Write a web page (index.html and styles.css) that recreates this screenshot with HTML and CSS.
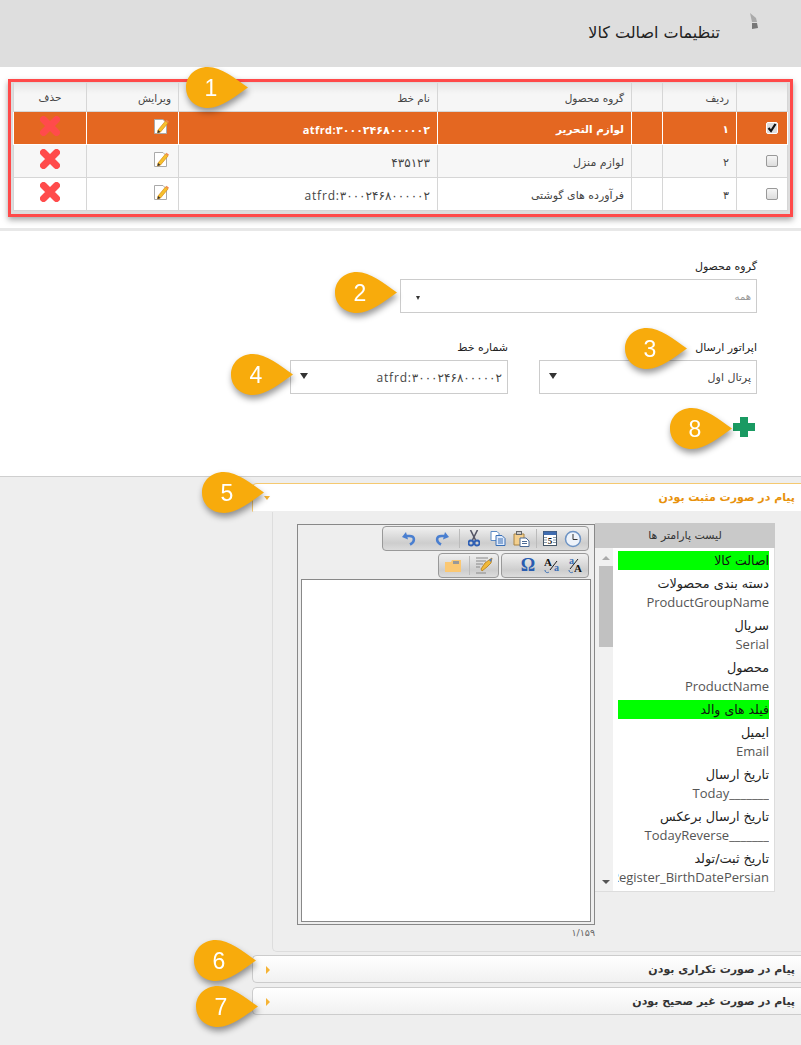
FILE: index.html
```html
<!DOCTYPE html>
<html lang="fa" dir="rtl">
<head>
  <meta charset="utf-8">
  <title>تنظیمات اصالت کالا</title>
  <link rel="stylesheet" href="styles.css">
</head>
<body>

<svg class="defs" width="0" height="0">
  <symbol id="drop" viewBox="0 0 62 41">
    <path d="M22 0C35 0 50 12 62 20.500C50 29 35 41 22 41C8 41 0 31 0 20.500C0 10 8 0 22 0Z"/>
  </symbol>
  <symbol id="note" viewBox="0 0 16 17">
    <path d="M1.500 1.500H10L13.500 5V15.500H1.500Z" fill="#fff" stroke="#aaa"/>
    <path d="M5 12L12.500 3L15 5L7.500 14L4.500 15Z" fill="#f6c02c" stroke="#d98a12" stroke-width=".7"/>
    <path d="M12.500 3L13.500 1.800L16 3.800L15 5Z" fill="#f08a4b"/>
    <path d="M4.500 15L5 12L7.500 14Z" fill="#333"/>
  </symbol>
  <symbol id="cross" viewBox="0 0 20 20">
    <path d="M3.500 3.500L16.500 16.500M16.500 3.500L3.500 16.500" stroke="#ff4b4b" stroke-width="7" stroke-linecap="round"/>
  </symbol>
</svg>

<!-- page title -->
<div class="page_head">
  <svg class="head_icon" width="8" height="16" viewBox="0 0 8 16"><path d="M0 0L6 5L7 9H2Z" fill="#aaa"/><path d="M2 10H7L8 15L2 16Z" fill="#777"/></svg>
  <h1 class="page_title">تنظیمات اصالت کالا</h1>
</div>

<!-- grid with the red frame -->
<div class="grid_area">
  <div class="grid_frame">
    <table class="grid">
      <colgroup>
        <col class="c_check"><col class="c_row"><col class="c_gap"><col class="c_group"><col class="c_line"><col class="c_edit"><col class="c_del">
      </colgroup>
      <tr class="grid_head">
        <th></th><th>ردیف</th><th></th><th>گروه محصول</th><th>نام خط</th><th>ویرایش</th><th class="center">حذف</th>
      </tr>
      <tr class="selected">
        <td class="cell_check"><span class="check on">
          <svg width="10" height="10" viewBox="0 0 10 10"><path d="M1.500 5L4 8L8.500 1" fill="none" stroke="#111" stroke-width="2.200"/></svg>
        </span></td>
        <td>۱</td><td></td><td>لوازم التحریر</td><td class="num"><span dir="ltr">atfrd:۳۰۰۰۲۴۶۸۰۰۰۰۰۲</span></td>
        <td class="cell_note"><svg class="note" width="16" height="17"><use href="#note"/></svg></td>
        <td class="center"><svg class="cross" width="20" height="20"><use href="#cross"/></svg></td>
      </tr>
      <tr class="odd">
        <td class="cell_check"><span class="check"></span></td>
        <td>۲</td><td></td><td>لوازم منزل</td><td class="num">۴۳۵۱۲۳</td>
        <td class="cell_note"><svg class="note" width="16" height="17"><use href="#note"/></svg></td>
        <td class="center"><svg class="cross" width="20" height="20"><use href="#cross"/></svg></td>
      </tr>
      <tr>
        <td class="cell_check"><span class="check"></span></td>
        <td>۳</td><td></td><td>فرآورده های گوشتی</td><td class="num"><span dir="ltr">atfrd:۳۰۰۰۲۴۶۸۰۰۰۰۰۲</span></td>
        <td class="cell_note"><svg class="note" width="16" height="17"><use href="#note"/></svg></td>
        <td class="center"><svg class="cross" width="20" height="20"><use href="#cross"/></svg></td>
      </tr>
    </table>
  </div>
</div>

<!-- form -->
<div class="form_area">
  <div class="field wide">
    <label class="field_label">گروه محصول</label>
    <div class="combo"><span class="combo_hint">همه</span><span class="arrow small"></span></div>
  </div>
  <div class="field_row">
    <div class="field">
      <label class="field_label">اپراتور ارسال</label>
      <div class="combo"><span>پرتال اول</span><span class="arrow"></span></div>
    </div>
    <div class="field">
      <label class="field_label">شماره خط</label>
      <div class="combo"><span class="num" dir="ltr">atfrd:۳۰۰۰۲۴۶۸۰۰۰۰۰۲</span><span class="arrow"></span></div>
    </div>
  </div>
  <svg class="plus" width="22" height="20" viewBox="0 0 22 20"><path d="M7 0H15V6H22V14H15V20H7V14H0V6H7Z" fill="#1a9a62"/></svg>
</div>

<!-- message panels -->
<div class="acc_area">
  <div class="acc_head open">پیام در صورت مثبت بودن<span class="acc_arrow down"></span></div>
  <div class="acc_body">

    <div class="params">
      <div class="params_title">لیست پارامتر ها</div>
      <div class="params_box">
        <div class="params_list">
          <div class="param_group">اصالت کالا</div>
          <div class="param"><div>دسته بندی محصولات</div><div class="param_key"><span dir="ltr">ProductGroupName</span></div></div>
          <div class="param"><div>سریال</div><div class="param_key"><span dir="ltr">Serial</span></div></div>
          <div class="param"><div>محصول</div><div class="param_key"><span dir="ltr">ProductName</span></div></div>
          <div class="param_group second">فیلد های والد</div>
          <div class="param"><div>ایمیل</div><div class="param_key"><span dir="ltr">Email</span></div></div>
          <div class="param"><div>تاریخ ارسال</div><div class="param_key"><span dir="ltr">Today_______</span></div></div>
          <div class="param"><div>تاریخ ارسال برعکس</div><div class="param_key"><span dir="ltr">TodayReverse_______</span></div></div>
          <div class="param"><div>تاریخ ثبت/تولد</div><div class="param_key"><span dir="ltr">Register_BirthDatePersian</span></div></div>
        </div>
        <div class="scroll">
          <span class="scroll_up"></span>
          <span class="scroll_thumb"></span>
          <span class="scroll_down"></span>
        </div>
      </div>
    </div>

    <div class="editor_col">
      <div class="editor">
        <div class="tool_row">
          <div class="tool_group first">
            <span class="tool"><svg width="18" height="18" viewBox="0 0 18 18"><circle cx="9" cy="9" r="7.500" fill="#eef3fa" stroke="#6d93c4" stroke-width="1.500"/><path d="M9 4V9.500H13.500" fill="none" stroke="#333"/></svg></span>
            <span class="tool narrow"><svg width="14" height="15" viewBox="0 0 14 15"><rect x=".5" y=".5" width="13" height="14" fill="#fff" stroke="#456"/><rect x=".5" y=".5" width="13" height="3.500" fill="#3f6cb0"/><path d="M1 6.500H4M1 9H4M1 11.500H4M10 6.500H13M10 9H13M10 11.500H13" stroke="#89a"/><text class="tool_letter" x="7" y="12.500" text-anchor="middle">5</text></svg></span>
            <span class="tool_sep"></span>
            <span class="tool"><svg width="18" height="16" viewBox="0 0 18 16"><path d="M1 3H4V1H8V3H11V14H1Z" fill="#f3cf8e" stroke="#a98444"/><rect x="3.500" y=".5" width="5" height="3" fill="#ccc" stroke="#666"/><path d="M7 7H13L16 10V15.500H7Z" fill="#fff" stroke="#4c6a96"/><path d="M9 10.500H14M9 12.500H14" stroke="#4c6a96"/></svg></span>
            <span class="tool"><svg width="16" height="15" viewBox="0 0 16 15"><path d="M1 .5H7L9 2.500V9.500H1Z" fill="#fff" stroke="#5b8ac4"/><path d="M6 4.500H12L15 7.500V14.500H6Z" fill="#dfeafa" stroke="#3a6fb5"/><path d="M8 8H13M8 10H13M8 12H13" stroke="#3a6fb5"/></svg></span>
            <span class="tool"><svg width="12" height="17" viewBox="0 0 12 17"><path d="M2.500 0L7.500 10M9.500 0L4.500 10" stroke="#556" stroke-width="1.600"/><circle cx="3" cy="13" r="2.500" fill="none" stroke="#2f5fb3" stroke-width="1.800"/><circle cx="9" cy="13" r="2.500" fill="none" stroke="#2f5fb3" stroke-width="1.800"/></svg></span>
            <span class="tool_sep"></span>
            <span class="tool redo"><svg width="14" height="15" viewBox="0 0 14 15"><path d="M10 1L14 6L8 8.500Z" fill="#4a7fd0"/><path d="M10.500 5H6.500C1 5 .5 10.500 6 13.500" fill="none" stroke="#4a7fd0" stroke-width="2.600"/></svg></span>
            <span class="tool undo"><svg width="14" height="15" viewBox="0 0 14 15"><path d="M4 1L0 6L6 8.500Z" fill="#4a7fd0"/><path d="M3.500 5H7.500C13 5 13.500 10.500 8 13.500" fill="none" stroke="#4a7fd0" stroke-width="2.600"/></svg></span>
          </div>
        </div>
        <div class="tool_row">
          <div class="tool_group format">
            <span class="tool"><svg width="16" height="17" viewBox="0 0 16 17"><text class="tool_a big" x="6" y="15">A</text><text class="tool_a blue" x="1" y="7">a</text><path d="M2 12L10 2" stroke="#222"/><path d="M1 13C1 16 4 16 5 15" fill="none" stroke="#3a6fb5"/></svg></span>
            <span class="tool"><svg width="16" height="17" viewBox="0 0 16 17"><text class="tool_a big" x="0" y="9">A</text><text class="tool_a blue" x="10" y="14">a</text><path d="M6 13L13 4" stroke="#222"/><path d="M1 13C1 16 4 16 5 15" fill="none" stroke="#3a6fb5"/></svg></span>
            <span class="tool omega">Ω</span>
          </div>
          <div class="tool_group files">
            <span class="tool"><svg width="17" height="17" viewBox="0 0 17 17"><path d="M0 1H12M0 4H10M0 7H7M0 10H4M0 16H10" stroke="#888"/><path d="M5 12L9 6L13 3L16 1L15 6L11 10L6 14Z" fill="#f0b93a" stroke="#b57b17" stroke-width=".8"/><path d="M13 3L16 1L15 5Z" fill="#4a7fd0"/></svg></span>
            <span class="tool_sep"></span>
            <span class="tool folder"><svg width="16" height="12" viewBox="0 0 16 12"><path d="M0 2H6L7 0H16V12H0Z" fill="#fbc873"/><rect x="8" y="1" width="6" height="3" fill="#999"/></svg></span>
          </div>
        </div>
        <div class="edit_box"></div>
      </div>
      <div class="counter"><span dir="ltr">۱/۱۵۹</span></div>
    </div>

  </div>
  <div class="acc_head">پیام در صورت تکراری بودن<span class="acc_arrow"></span></div>
  <div class="acc_head">پیام در صورت غیر صحیح بودن<span class="acc_arrow"></span></div>
</div>

<!-- numbered callouts over the screenshot -->
<svg class="mark m1" width="62" height="41"><use href="#drop"/><text x="25" y="29">1</text></svg>
<svg class="mark m2" width="62" height="41"><use href="#drop"/><text x="25" y="29">2</text></svg>
<svg class="mark m3" width="62" height="41"><use href="#drop"/><text x="25" y="29">3</text></svg>
<svg class="mark m4" width="62" height="41"><use href="#drop"/><text x="25" y="29">4</text></svg>
<svg class="mark m5" width="62" height="41"><use href="#drop"/><text x="25" y="29">5</text></svg>
<svg class="mark m6" width="62" height="41"><use href="#drop"/><text x="25" y="29">6</text></svg>
<svg class="mark m7" width="62" height="41"><use href="#drop"/><text x="25" y="29">7</text></svg>
<svg class="mark m8" width="62" height="41"><use href="#drop"/><text x="25" y="29">8</text></svg>

</body>
</html>
```

FILE: styles.css
```css
/** whole page **/
  html, body {
    margin: 0;
    padding: 0;
    height: 1045px;
    overflow: hidden;
  }

  body {
    position: relative;
    background-color: #eeeeee;
    color: #333333;
    font-family: "DejaVu Sans", sans-serif;
    font-size: 11px;
  }

  svg {
    direction: ltr;
  }

  .defs {
    position: absolute;
  }

/** title bar **/
  .page_head {
    display: flex;
    align-items: flex-start;
    gap: 30px;
    height: 67px;
    padding-right: 43px;
    background-color: #dedede;
  }

  .head_icon {
    margin-top: 13px;
  }

  .page_title {
    margin: 22px 0 0 0;
    font-size: 16px;
    font-weight: normal;
    line-height: 22px;
    color: #222222;
  }

/** white strip round the grid **/
  .grid_area {
    padding: 12px 8px 11px 8px;
    background-color: #ffffff;
  }

/** red frame round the grid **/
  .grid_frame {
    box-sizing: border-box;
    height: 138px;
    padding: 1px 2px 0 2px;
    background-color: #dddddd;
    border: 3px solid #ff4a4a;
    box-shadow: 0 3px 6px rgba(0, 0, 0, 0.35);
  }

/** the grid **/
  .grid {
    width: 774px;
    table-layout: fixed;
    border-collapse: collapse;
    background-color: #ffffff;
  }

  .c_check { width: 51px; }
  .c_row { width: 74px; }
  .c_gap { width: 31px; }
  .c_group { width: 194px; }
  .c_line { width: 259px; }
  .c_edit { width: 92px; }
  .c_del { width: 73px; }

  .grid th,
  .grid td {
    padding: 3px 7px 0 7px;
    border: 1px solid #d6d6d6;
    text-align: right;
    font-size: 11px;
    color: #444444;
    white-space: nowrap;
    overflow: hidden;
  }

  .grid th {
    height: 28px;
    padding-top: 2px;
    box-sizing: border-box;
    font-size: 10.500px;
    font-weight: normal;
    background: linear-gradient(#e6e6e6, #f6f6f6 40%);
    border-top: 0;
  }

  .grid td {
    height: 32px;
    box-sizing: border-box;
    height: 33px;
  }

  .grid .center {
    text-align: center;
    padding: 0;
  }

  .grid td.center {
    padding-bottom: 3px;
  }

  .grid .cell_check {
    padding: 0 9px 0 0;
  }

  .grid .cell_note {
    padding: 0 7px 2px 7px;
  }

  .grid .odd td {
    background-color: #f7f7f7;
  }

  .grid .selected td {
    background-color: #e46721;
    border-color: #ffffff;
    color: #ffffff;
    font-size: 10.500px;
    font-weight: bold;
  }

  .grid .num,
  .combo .num {
    font-family: "Open Sans", "DejaVu Sans", sans-serif;
    font-size: 12px;
    letter-spacing: 0.800px;
  }

  .grid .selected .num {
    font-size: 11px;
    letter-spacing: 0.400px;
  }

  .note {
    display: block;
    margin-right: 2px;
  }

  .cross {
    display: block;
    margin: 0 auto;
  }

  .check {
    display: block;
    box-sizing: border-box;
    width: 12px;
    height: 12px;
    background: linear-gradient(#f6f6f6, #dddddd);
    border: 1px solid #999999;
    border-radius: 2px;
  }

  .check svg {
    display: block;
  }

  .check.on {
    background: #dddddd;
    border-color: #ffffff;
  }

/** form area **/
  .form_area {
    box-sizing: border-box;
    height: 249px;
    padding: 28px 44px 0 0;
    background-color: #ffffff;
    border-top: 3px solid #e8e8e8;
    border-bottom: 1px solid #cfcfcf;
  }

  .field {
    width: 218px;
  }

  .field.wide {
    width: 357px;
  }

  .field_row {
    display: flex;
    gap: 31px;
    margin-top: 27px;
  }

  .field_label {
    display: block;
    height: 16px;
    margin-bottom: 4px;
    font-size: 11px;
    line-height: 16px;
    color: #222222;
  }

  .combo {
    box-sizing: border-box;
    display: flex;
    justify-content: space-between;
    align-items: center;
    height: 34px;
    padding: 0 5px 0 9px;
    border: 1px solid #cccccc;
    background-color: #ffffff;
    font-size: 11px;
    color: #444444;
  }

  .combo_hint {
    color: #999999;
    font-size: 10px;
  }

  .arrow {
    width: 0;
    height: 0;
    border-style: solid;
    border-width: 6px 4px 0 4px;
    border-color: #333333 transparent transparent transparent;
    margin-bottom: 3px;
  }

  .arrow.small {
    border-width: 4px 2.500px 0 2.500px;
    margin: 4px 6px 0 6px;
  }

  .plus {
    display: block;
    margin: 23px 2px 0 0;
  }

/** message panels **/
  .acc_area {
    padding: 6px 0 0 252px;
  }

  .acc_head {
    box-sizing: border-box;
    position: relative;
    height: 28px;
    margin-bottom: 4px;
    padding-right: 6px;
    background: linear-gradient(#ffffff, #f1f1f1);
    border: 1px solid #cccccc;
    border-right: 0;
    border-radius: 5px 0 0 5px;
    font-size: 11px;
    font-weight: bold;
    line-height: 27px;
    color: #333333;
  }

  .acc_head.open {
    height: 29px;
    margin-bottom: 0;
    background: #ffffff;
    border-color: #f5c970;
    border-bottom-color: #eeeeee;
    border-radius: 5px 0 0 0;
    color: #e8920c;
  }

  .acc_arrow {
    position: absolute;
    left: 13px;
    top: 10px;
    width: 0;
    height: 0;
    border-style: solid;
    border-width: 4px 0 4px 4px;
    border-color: transparent transparent transparent #f5b335;
  }

  .acc_arrow.down {
    top: 12px;
    left: 11px;
    border-width: 4px 3px 0 3px;
    border-color: #f5b335 transparent transparent transparent;
  }

  .acc_body {
    box-sizing: border-box;
    display: flex;
    align-items: flex-start;
    height: 440px;
    margin: 0 0 3px 20px;
    padding: 11px 26px 0 0;
    border: 1px solid #dddddd;
    border-width: 0 0 1px 1px;
    border-radius: 0 0 0 5px;
  }

/** parameter list **/
  .params {
    width: 180px;
  }

  .params_title {
    height: 25px;
    background-color: #c9c9c9;
    text-align: center;
    font-size: 11px;
    line-height: 25px;
    color: #333333;
  }

  .params_box {
    box-sizing: border-box;
    display: flex;
    height: 344px;
    background-color: #f1f1f1;
    border-bottom: 1px solid #dddddd;
    border-right: 1px solid #dddddd;
  }

  .params_list {
    flex: 1;
    min-width: 0;
    padding: 3px 5px 0 5px;
    background-color: #ffffff;
    overflow: hidden;
  }

  .param_group {
    height: 19px;
    background-color: #00ff00;
    font-size: 12.500px;
    line-height: 19px;
    color: #111111;
  }

  .param_group.second {
    margin-top: 4px;
  }

  .param {
    box-sizing: border-box;
    height: 42px;
    padding-top: 5px;
    font-size: 12.800px;
    line-height: 18px;
    color: #222222;
    white-space: nowrap;
  }

  .param_key {
    font-family: "Open Sans", sans-serif;
    font-size: 13px;
    color: #555555;
    overflow: hidden;
  }

  .scroll {
    box-sizing: border-box;
    display: flex;
    flex-direction: column;
    align-items: center;
    flex: none;
    width: 18px;
    padding: 8px 0 7px 4px;
  }

  .scroll_up,
  .scroll_down {
    width: 0;
    height: 0;
    border-style: solid;
    border-width: 0 4px 4px 4px;
    border-color: transparent transparent #aaaaaa transparent;
  }

  .scroll_down {
    margin-top: auto;
    border-width: 4px 4px 0 4px;
    border-color: #555555 transparent transparent transparent;
  }

  .scroll_thumb {
    width: 14px;
    height: 81px;
    margin-top: 6px;
    background-color: #c1c1c1;
  }

/** editor **/
  .editor_col {
    width: 298px;
    margin-top: 1px;
  }

  .editor {
    box-sizing: border-box;
    height: 401px;
    padding: 0 3px;
    background-color: #eeeeee;
    border: 1px solid #888888;
  }

  .tool_row {
    display: flex;
    gap: 2px;
    height: 27px;
    padding-right: 2px;
  }

  .tool_group {
    box-sizing: border-box;
    display: flex;
    align-items: center;
    height: 25px;
    margin-top: 1px;
    padding: 0 3px;
    background: linear-gradient(#f0f0f0, #cdcdcd 70%, #dcdcdc);
    border: 1px solid #999999;
    border-radius: 4px;
  }

  .tool_group.first {
    width: 207px;
  }

  .tool_group.format {
    width: 88px;
    padding: 0;
  }

  .tool_group.files {
    width: 61px;
    padding: 0 2px 0 0;
  }

  .tool {
    display: flex;
    align-items: center;
    justify-content: center;
    flex: none;
    width: 24px;
    height: 23px;
  }

  .tool.narrow { width: 22px; }
  .tool.redo { width: 30px; }
  .tool.undo { width: 36px; }
  .tool.folder { width: 28px; }

  .tool_sep {
    flex: none;
    width: 1px;
    height: 19px;
    margin: 0 2px;
    background-color: #bbbbbb;
  }

  .tool.omega {
    font-family: "Liberation Serif", serif;
    font-size: 18px;
    font-weight: bold;
    color: #2a5db0;
  }

  .tool_letter {
    font-family: "Liberation Serif", serif;
    font-size: 9px;
    font-weight: bold;
    fill: #111111;
  }

  .tool_a {
    font-family: "Liberation Serif", serif;
    font-size: 10px;
    font-weight: bold;
  }

  .tool_a.big {
    font-size: 11px;
    fill: #111111;
  }

  .tool_a.blue {
    fill: #3a6fb5;
  }

  .edit_box {
    box-sizing: border-box;
    height: 343px;
    background-color: #ffffff;
    border: 1px solid #888888;
  }

  .counter {
    margin-top: 1px;
    font-size: 9.500px;
    line-height: 14px;
    color: #666666;
  }

/** numbered callouts **/
  .mark {
    position: absolute;
    fill: #f8ab0c;
    overflow: visible;
    filter: drop-shadow(1px 4px 3px rgba(0, 0, 0, 0.4));
  }

  .mark text {
    fill: #ffffff;
    font-family: "Liberation Sans", sans-serif;
    font-size: 23px;
    text-anchor: middle;
  }

  .m1 { left: 186px; top: 67px; }
  .m2 { left: 335px; top: 272px; }
  .m3 { left: 625px; top: 328px; }
  .m4 { left: 231px; top: 354px; }
  .m5 { left: 202px; top: 472px; }
  .m6 { left: 194px; top: 940px; }
  .m7 { left: 196px; top: 986px; }
  .m8 { left: 670px; top: 408px; }
```
